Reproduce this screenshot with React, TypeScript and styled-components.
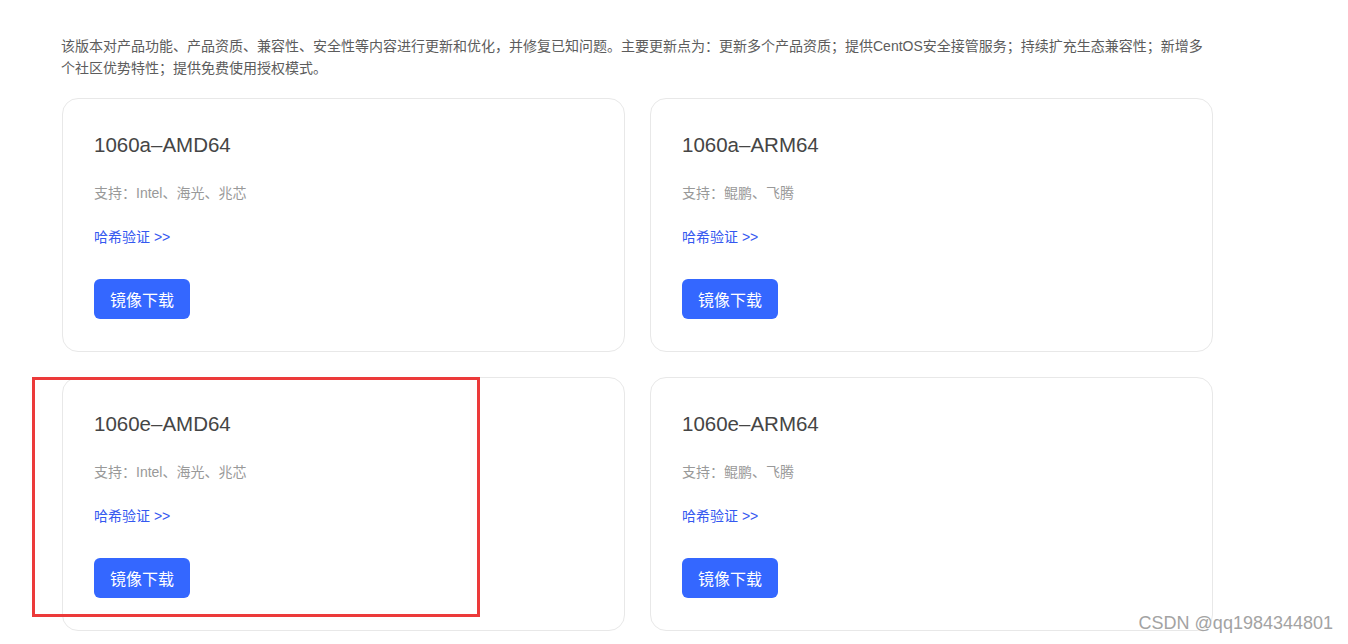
import styled, { createGlobalStyle } from "styled-components";

const GlobalStyle = createGlobalStyle`
    body {
        margin: 0;
        background: #fff;
        font-family: "Liberation Sans", "Noto Sans CJK SC", sans-serif;
        overflow: hidden;
    }
`;

const Page = styled.div`
    position: relative;
    width: 1348px;
    height: 644px;
    padding: 35px 0 0 61px;
    box-sizing: border-box;
`;

const Intro = styled.p`
    margin: 0;
    width: 1146px;
    font-size: 14px;
    line-height: 22px;
    color: #5c5c5c;
`;

const Grid = styled.div`
    display: grid;
    grid-template-columns: 563px 563px;
    gap: 25px;
    margin: 19px 0 0 1px;
`;

const Card = styled.div`
    display: flex;
    flex-direction: column;
    align-items: flex-start;
    height: 254px;
    box-sizing: border-box;
    padding: 32px 31px;
    border: 1px solid #e8e8e8;
    border-radius: 16px;
    background: #fff;
`;

const Title = styled.h3`
    margin: 0;
    font-size: 20.5px;
    line-height: 28px;
    font-weight: 400;
    color: #454545;
`;

const Support = styled.p`
    margin: 23px 0 0;
    font-size: 14px;
    line-height: 22px;
    color: #999;
`;

const HashLink = styled.a`
    margin-top: 22px;
    font-size: 14px;
    line-height: 22px;
    color: #3458f0;
    text-decoration: none;
`;

const DownloadButton = styled.button`
    margin-top: 31px;
    height: 40px;
    padding: 0 16px;
    border: none;
    border-radius: 6px;
    background: #3467ff;
    color: #fff;
    font-family: "Noto Sans CJK SC", sans-serif;
    font-size: 16px;
    cursor: pointer;
`;

const Highlight = styled.div`
    position: absolute;
    left: 32px;
    top: 377px;
    width: 448px;
    height: 240px;
    box-sizing: border-box;
    border: 3px solid #ec3a3a;
    pointer-events: none;
`;

const Watermark = styled.span`
    position: absolute;
    right: 15px;
    top: 613px;
    font-size: 18px;
    color: #a3a3a3;
    text-shadow: 0 0 2px #fff;
`;

const builds = [
    { name: "1060a–AMD64", chips: "Intel、海光、兆芯" },
    { name: "1060a–ARM64", chips: "鲲鹏、飞腾" },
    { name: "1060e–AMD64", chips: "Intel、海光、兆芯" },
    { name: "1060e–ARM64", chips: "鲲鹏、飞腾" },
];

export default function App() {
    return (
        <>
            <GlobalStyle />
            <Page>
                <Intro>
                    该版本对产品功能、产品资质、兼容性、安全性等内容进行更新和优化，并修复已知问题。主要更新点为：更新多个产品资质；提供CentOS安全接管服务；持续扩充生态兼容性；新增多个社区优势特性；提供免费使用授权模式。
                </Intro>
                <Grid>
                    {builds.map((b) => (
                        <Card key={b.name}>
                            <Title>{b.name}</Title>
                            <Support>支持：{b.chips}</Support>
                            <HashLink href="#">哈希验证 &gt;&gt;</HashLink>
                            <DownloadButton>镜像下载</DownloadButton>
                        </Card>
                    ))}
                </Grid>
                <Highlight />
                <Watermark>CSDN @qq1984344801</Watermark>
            </Page>
        </>
    );
}
